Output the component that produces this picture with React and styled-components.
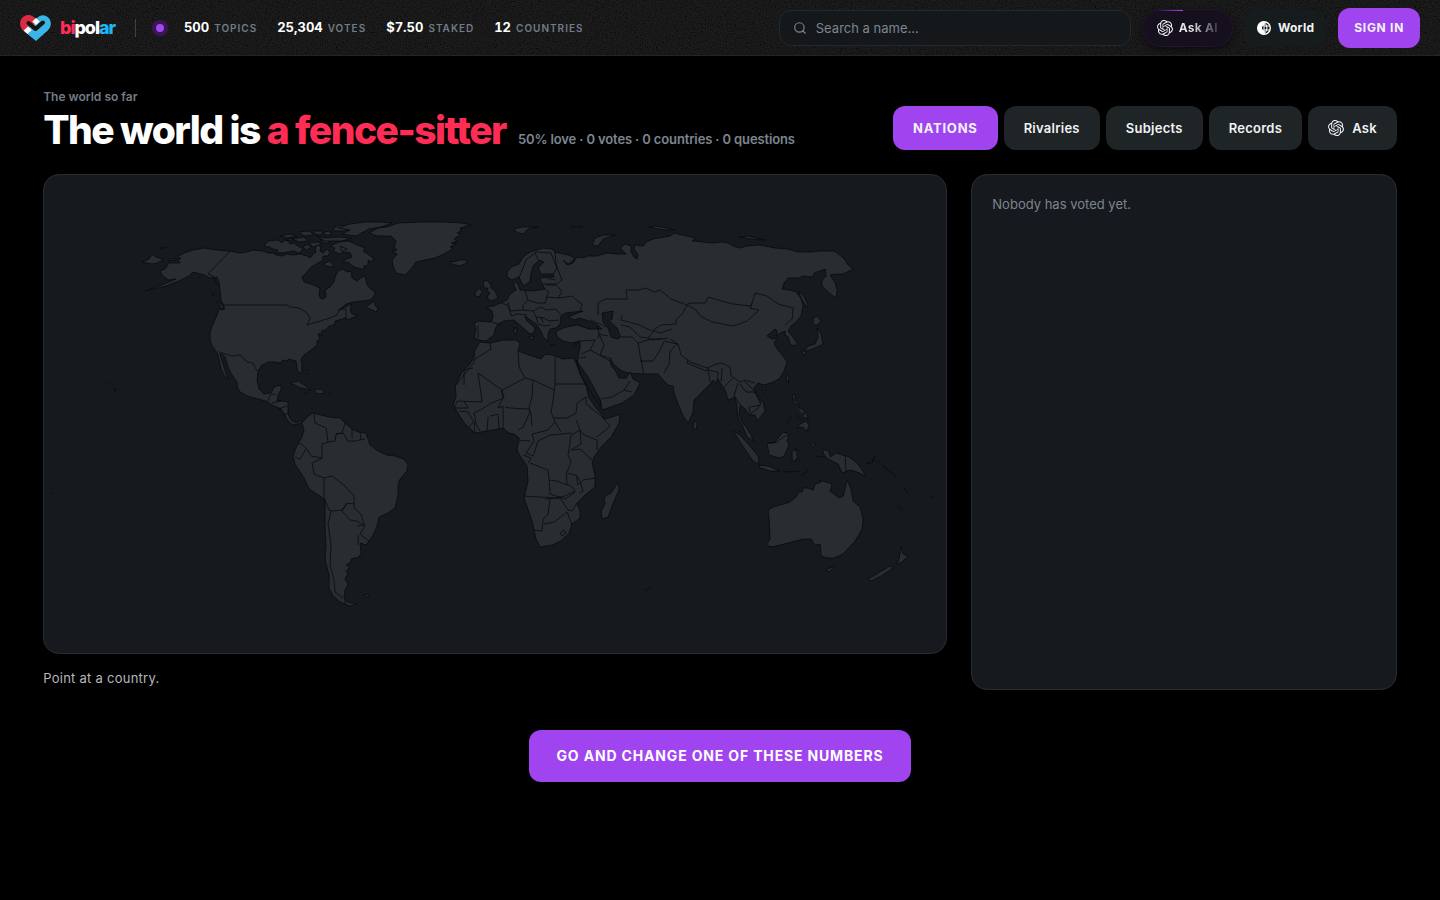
import React from 'react'
import styled, { createGlobalStyle } from 'styled-components';
import { SiOpenai } from 'react-icons/si';
import { Search } from 'lucide-react';

const GlobalStyle = createGlobalStyle`
  * {
    box-sizing: border-box;
  }
  body {
    margin: 0;
    background: #000;
    color: #fff;
    font-family: Inter, "Liberation Sans", sans-serif;
  }
  button, input {
    font-family: inherit;
  }
`;

const stats = [
  { value: '500', label: 'Topics' },
  { value: '25,304', label: 'Votes' },
  { value: '$7.50', label: 'Staked' },
  { value: '12', label: 'Countries' },
];

const tabs = ['Nations', 'Rivalries', 'Subjects', 'Records', 'Ask'];

// Land masses, north to south
const land = [
  // north america
  'M169 263L180 263 178 260 168 261 170 259 181 259 178 256 184 253 193 250 204 248 217 250 230 251 240 253 247 252 253 250 263 251 268 253 273 253 276 255 283 256 286 254 293 255 300 254 307 256 310 258 313 254 316 252 315 248 318 245 321 247 320 251 323 253 327 249 330 252 328 256 323 256 322 261 316 264 310 268 307 272 302 277 304 282 311 284 320 288 319 294 320 298 323 299 326 297 325 290 330 287 334 282 335 277 338 271 343 269 347 272 351 271 352 278 357 281 362 277 365 276 367 285 371 289 375 292 374 296 370 300 363 301 353 302 346 304 338 311 345 307 352 304 350 309 352 314 358 315 352 318 347 320 346 317 342 319 335 321 335 324 328 327 325 331 323 330 321 332 322 336 319 333 318 335 320 338 317 341 317 345 311 350 304 355 301 359 302 366 302 371 300 374 297 369 296 361 289 359 286 361 283 360 280 363 274 362 268 362 261 366 258 371 257 380 259 389 264 394 271 393 274 387 281 385 281 390 278 395 277 401 283 401 288 402 288 414 291 420 296 423 301 421 303 423 298 424 293 425 288 421 284 414 281 409 272 405 266 401 258 399 247 396 239 391 237 386 237 382 232 375 228 367 225 357 222 354 220 354 223 364 225 370 228 379 225 377 221 369 218 355 216 351 212 346 210 340 210 332 213 324 217 315 219 309 223 310 224 306 221 300 220 290 219 283 217 277 210 278 204 275 197 273 193 272 189 276 179 281 166 286 145 291 164 284 176 279 168 280 162 275 160 271 165 269Z',
  'M142 262L149 259 152 254 156 257 163 259 158 263 152 264Z',
  'M160 248L166 247 164 249Z',
  'M264 246L268 241 278 240 282 243 284 240 288 241 290 244 294 243 298 246 303 249 299 253 293 251 288 252 281 253 276 252 278 250 273 249 269 247Z',
  'M280 236L290 234 297 236 287 238Z',
  'M284 240L290 238 297 239 291 240Z',
  'M292 239L304 237 308 241 299 242Z',
  'M303 247L308 244 311 248 306 250Z',
  'M309 243L318 242 322 244 313 247Z',
  'M320 240L327 240 330 243 324 243Z',
  'M316 236L325 238 338 237 352 238 342 241 325 241Z',
  'M299 232L309 231 314 235 304 236Z',
  'M313 231L323 231 321 235 315 234Z',
  'M324 232L330 231 331 235 325 235Z',
  'M332 229L340 225 348 227 343 231 335 231Z',
  'M338 228L350 224 365 222 380 222 392 223 381 227 369 229 356 236 342 234 350 230Z',
  'M330 246L339 242 349 241 357 245 365 248 363 251 368 254 374 259 371 262 368 260 368 265 364 266 364 269 361 269 354 267 348 262 343 263 346 259 352 257 350 253 346 252 339 254 333 251 335 248Z',
  'M323 264L330 261 334 266 328 267Z',
  'M340 246L347 249 342 252Z',
  // greenland
  'M369 233L378 228 387 227 398 223 420 222 445 222 462 223 471 225 460 228 461 231 457 233 461 234 454 239 457 241 451 243 456 244 450 247 453 249 444 254 435 258 425 260 416 262 411 269 405 275 396 273 393 266 392 260 397 254 392 251 397 250 394 248 396 241 391 236 377 236Z',
  'M449 261L454 262 460 260 466 260 467 263 459 266 452 264Z',
  'M365 308L374 301 375 305 378 309 376 312 370 309Z',
  'M217 301L220 303 225 309 221 308Z',
  'M211 291L214 292 213 296Z',
  // caribbean and hawaii
  'M290 383L298 381 304 385 311 390 301 388Z',
  'M304 392L309 393 306 395Z',
  'M314 390L321 389 325 393 317 394Z',
  'M328 393L331 393 330 395Z',
  'M305 370L308 371M309 373L307 375',
  'M106 383L108 384M111 385L113 386M114 388L116 390 115 391Z',
  // south america
  'M302 423L307 417 313 413 317 414 321 415 329 417 340 418 345 423 352 429 358 432 366 433 370 445 378 451 387 455 395 456 404 459 408 465 407 471 400 479 398 485 398 495 395 508 388 513 379 517 377 526 374 533 369 541 366 545 360 543 361 553 359 557 351 559 351 562 346 565 350 567 346 571 348 573 345 579 348 584 345 590 344 597 347 602 357 604 350 606 340 602 333 596 329 588 329 575 325 560 326 546 325 529 325 500 320 496 309 489 304 478 295 464 293 456 297 445 302 437 304 430Z',
  'M363 595L369 594 368 597Z',
  // europe and asia
  'M507 272L511 267 519 264 523 257 530 252 537 250 543 248 552 249 555 252 568 255 573 257 574 260 568 264 563 260 567 265 573 263 577 257 583 258 588 256 597 256 607 253 618 254 626 254 620 248 625 244 631 246 631 252 634 257 637 259 638 255 634 249 635 245 643 246 646 242 653 239 670 236 674 233 686 236 695 238 692 241 703 242 713 243 722 242 728 243 733 246 740 248 747 246 758 245 765 246 775 248 788 249 797 252 811 252 820 251 834 251 841 256 845 260 847 264 853 269 843 274 838 274 830 275 835 283 837 290 836 298 829 293 822 286 822 280 826 276 825 269 820 271 814 273 813 277 803 276 798 278 788 278 784 283 782 289 789 290 796 292 801 299 803 305 801 316 796 322 791 326 788 331 792 336 797 343 794 346 790 344 788 337 785 335 785 331 780 333 776 336 777 331 775 329 770 333 767 336 772 339 777 338 774 343 777 349 783 356 787 362 784 371 779 379 773 382 764 385 758 383 754 388 757 395 763 402 765 411 757 421 755 415 749 415 745 409 740 405 739 414 742 422 746 427 751 435 753 441 747 437 742 425 739 420 737 413 737 407 735 397 728 400 725 390 720 383 718 379 716 383 713 380 711 383 703 391 694 400 693 412 688 423 683 416 678 404 674 393 673 386 668 385 662 379 658 374 642 374 628 373 622 371 615 366 610 359 611 365 616 372 619 378 626 378 630 372 633 379 640 383 634 395 622 403 602 410 600 400 593 388 585 376 577 366 578 357 580 347 580 341 571 343 563 341 557 337 556 331 566 327 577 325 589 329 602 329 596 324 586 320 579 318 574 320 568 317 578 313 583 311 574 312 565 313 561 316 560 324 556 328 550 329 548 334 548 341 544 338 540 330 536 324 529 319 525 316 526 320 535 328 534 333 530 334 523 328 514 320 504 321 498 324 495 329 494 335 486 341 479 340 474 338 476 329 474 323 479 321 491 322 493 317 492 311 486 307 494 306 500 303 507 300 510 294 516 290 513 284 517 282 520 290 532 291 545 289 541 282 540 278 547 277 554 277 553 274 541 274 538 268 544 262 539 260 533 266 531 273 530 281 524 286 521 282 519 277 512 280 507 277Z',
  'M489 300L487 297 490 293 487 291 488 288 484 288 483 282 487 280 491 285 491 288 495 291 498 298 491 301Z',
  'M475 292L480 288 482 292 479 297 475 296Z',
  'M513 229L522 227 538 227 528 229 523 234 518 233Z',
  'M570 227L581 226M583 227L579 228',
  'M592 245L595 238 604 235 615 235 603 239 598 246Z',
  'M649 227L655 226 666 228 675 230 664 230Z',
  'M739 237L748 236 765 240 751 239Z',
  'M798 291L803 295 808 305 807 307 802 300Z',
  'M813 318L817 316 821 321 816 326 813 323Z',
  'M817 328L821 334 823 344 819 346 810 350 803 352 808 346 815 344 818 337Z',
  'M801 351L806 351 804 356Z',
  'M787 374L789 377 788 383 786 379Z',
  'M762 391L766 390 764 394Z',
  'M694 420L697 424 696 430 693 428Z',
  'M528 337L534 336 533 340Z',
  'M513 324L516 323 516 327 514 327ZM514 328L517 329 516 334 514 333Z',
  'M550 345L556 345M573 345L578 343 575 346Z',
  // africa
  'M480 342L490 343 503 340 516 340 520 343 518 351 529 355 541 359 545 354 552 355 563 359 573 358 576 363 580 374 586 386 589 398 596 408 602 415 604 419 612 417 620 414 619 423 611 437 601 447 594 457 592 463 595 475 595 487 586 494 577 503 580 511 580 518 572 524 569 533 561 541 552 545 540 547 536 539 532 521 524 498 528 481 527 466 520 456 517 450 519 438 514 434 509 433 503 428 492 430 481 432 475 433 465 424 459 415 453 405 456 396 455 386 462 372 469 365 474 358 475 350Z',
  'M618 482L619 490 614 501 608 517 602 519 601 511 605 504 604 497 611 493Z',
  // islands of the south east
  'M792 395L795 394 795 400 800 406 794 403Z',
  'M798 407L805 411 802 414M806 412L808 419 803 417M797 415L802 420',
  'M800 424L806 421 809 425 807 431 802 427 797 428Z',
  'M787 423L791 417M738 431L741 432',
  'M733 431L740 435 749 445 758 456 759 464 753 461 744 448Z',
  'M759 465L768 466 780 471 770 471 760 468Z',
  'M783 472L800 471M801 475L808 471',
  'M767 443L774 443 783 432 789 434 787 441 789 445 784 456 779 458 769 455Z',
  'M792 450L796 448 794 451 799 451 796 454 800 461 796 458 795 462 792 459Z',
  'M813 442L815 445 813 448M816 456L825 457',
  'M822 449L829 451 830 457 836 453 849 457 857 463 862 470 866 476 857 472 850 470 842 473 838 464 828 459 824 455Z',
  'M866 464L873 461 875 456 872 463ZM877 460L880 463M882 465L896 477M904 488L908 494M898 506L902 510 900 511ZM930 498L937 495',
  'M51 493L53 493M645 590L650 587 649 590Z',
  // australia and new zealand
  'M768 510L773 507 790 502 797 496 798 492 802 492 803 488 808 488 813 490 815 484 821 482 819 480 826 482 832 484 830 491 839 498 843 496 847 480 851 489 853 501 860 507 863 519 862 529 855 541 843 554 834 558 827 558 821 556 820 544 815 545 811 539 803 539 788 543 780 545 772 547 766 545 770 539 769 520Z',
  'M826 569L833 567 830 572 826 570Z',
  'M901 547L903 554 908 556 902 562 897 564 899 558Z',
  'M868 579L878 573 890 566 893 568 881 576 871 581Z',
];

// Inland waters
const water = [
  'M602 313L613 311 612 319 609 321 617 328 620 336 618 339 611 337 608 328 603 322Z',
  'M576 360L588 377 601 402 600 406 592 394 582 377Z',
];

const borders = [
  // americas
  'M230 251L208 274 213 276 216 282 220 287',
  'M224 305L287 305 290 307 299 308 306 312 310 318 307 325 313 323 320 321 330 318 337 315 340 309 346 309 346 316',
  'M219 352L232 356 240 355 247 362 253 363 257 371',
  'M268 401L270 395 276 394M272 403L281 401M278 409L287 406M283 414L288 414',
  'M314 414L315 423 326 428 328 442 335 441 336 434 342 433 345 423M336 434L343 433 348 441 354 441 365 439M352 429L352 438M360 431L361 440M328 442L322 444 322 458 311 456 307 449 300 443 298 444',
  'M295 457L300 459 306 449M322 458L312 463 314 474 324 478 324 498 329 510 331 511 342 510 347 503 354 504 354 496 345 486 332 476 324 478',
  'M347 503L342 511 350 520 357 521 365 526 360 534 369 541M357 526L364 525 361 514 354 508 354 504M331 511L328 524 331 545 330 565 334 580 335 592 343 598M345 599L345 605M358 535L358 545',
  // europe
  'M519 278L522 270 526 260 536 252 551 253 554 261 557 268 553 274M538 260L535 253',
  'M555 252L556 265 562 280 556 284 542 284M547 278L556 280M545 289L549 292 546 297 559 298 572 296 577 301 582 304 580 311',
  'M525 291L528 300 523 305 523 310 510 311 508 302M528 300L537 303 545 303 547 297M523 310L533 311 541 307 546 310 556 309 561 315M533 311L536 317 544 318 549 321 559 320M510 311L511 316 517 314 527 315M536 317L538 324 544 326 550 325M541 317L543 323M501 303L507 305 510 311M492 322L500 325M478 325L478 338',
  'M546 285L556 285 562 291 558 298M590 320L600 324 606 327M597 325L599 334 598 338M599 334L608 336',
  // middle east and central asia
  'M598 315L598 303 605 299 627 299 626 290 639 290 646 288 654 292 660 290 671 299 687 305 682 314 676 320 676 324 661 325 652 331 639 325 629 322 621 320 622 315',
  'M621 325L630 327 640 337 648 338 654 331 660 333 672 329M648 338L652 340 668 338',
  'M599 334L604 345 600 355 612 359M580 341L595 340 590 350 581 354M590 350L610 361M580 358L586 357M619 337L632 337 638 343 651 339 662 339M638 343L640 355 643 370 643 374M640 361L653 361 660 350 664 341 677 344 670 351 669 364 664 373M601 399L612 397 624 390 632 392M624 390L630 381',
  'M687 304L691 303 705 303 708 297 725 302 733 304 751 306 755 293 767 296 778 304 793 308 792 319 785 325',
  'M687 305L696 310 700 316 712 322 733 326 747 321 759 310 750 308 752 303',
  'M670 339L678 344 681 355 690 362 707 368 716 364 722 363 730 367 731 376 740 382 745 380 755 383M688 359L687 363 706 371 708 368M708 369L710 382M708 370L718 372 717 380M722 368L721 382M733 378L724 387M738 383L734 395 740 405M740 384L746 392 755 392 760 403M744 381L752 388 761 402 758 408 750 414M749 407L761 405M749 407L750 414',
  // africa
  'M490 343L491 349 475 359 474 362 456 385M473 368L464 370 464 385M478 373L502 390 525 378 519 367 518 351M478 373L482 402 457 401 455 407M502 390L504 398 491 403 482 409M525 378L533 380 554 390M555 357L555 384 586 384M555 384L553 400 551 412 555 422 548 430 532 434M533 380L532 396 529 408 531 414 532 426',
  'M505 407L510 408 528 409 530 412 523 427 518 430M498 408L503 406 503 428M490 416L498 414 499 429M488 417L487 431M482 409L474 413 476 424 480 431M459 411L468 412 473 421M455 408L468 408 464 401M469 427L474 421 475 433M501 390L503 397 498 408',
  'M532 434L534 441 526 453 533 456 538 441 550 435 562 434 571 433M518 440L530 441M523 455L531 458 528 463M530 463L548 470 549 480 557 481 567 485M555 422L561 432M554 418L567 418 576 413 577 403 586 397 586 404 601 416M576 420L580 430 571 435 568 455 571 462 567 472M580 430L584 435 597 440 597 450M571 450L580 449 592 460M580 430L581 444 571 450M601 416L610 426 597 437',
  'M524 496L555 498 565 496 575 491 572 487 567 484 566 473 576 475 578 485 583 480 595 478M549 480L550 494 565 499 575 492M550 498L548 514 543 519 542 531 533 530M545 499L560 498 568 510 572 511 577 503M544 524L554 522 567 512 572 525M576 475L580 481 583 491 579 493',
  'M560 533L564 530 566 533 562 536Z',
  // islands
  'M845 456L846 472M768 443L777 442 783 437 788 435',
];

function WorldMap() {
  return (
    <MapSvg viewBox='44 175 902 478' role='img' aria-label='World map'>
      <g fill='#2a2d30' stroke='#090b0e' strokeWidth='0.8' strokeLinejoin='round'>
        {land.map((d) => <path key={d} d={d} />)}
      </g>
      <g fill='#16191d' stroke='#090b0e' strokeWidth='0.8'>
        {water.map((d) => <path key={d} d={d} />)}
      </g>
      <g fill='none' stroke='#090b0e' strokeWidth='0.8' strokeLinejoin='round'>
        {borders.map((d) => <path key={d} d={d} />)}
      </g>
    </MapSvg>
  )
}

function HeartLogo() {
  return (
    <svg width='32' height='28' viewBox='1 0 30 28' preserveAspectRatio='none' aria-hidden='true'>
      <path d='M16 27L27 16.500C35 8 25 -3.500 17.500 3.500L8.500 12.500 3.500 16Z' fill='#3ab5e6' />
      <path d='M4.500 17C-4 9 5 -4 14 3L18 6.500 13 11.500 9 13Z' fill='#dc2b40' />
      <path d='M4.500 16.500L8.500 12.500 12 16 8 20Z' fill='#fff' />
      <path d='M9 9L15.500 15 22.500 8.500' fill='none' stroke='#141414' strokeWidth='4' strokeLinecap='round' strokeLinejoin='round' />
      <path d='M12.500 7.500L16 4 19.500 7.500 16 11Z' fill='#fff' />
    </svg>
  )
}

function GlobeIcon() {
  return (
    <svg width='14' height='14' viewBox='0 0 14 14' fill='none' stroke='#fff' aria-hidden='true'>
      <circle cx='7' cy='7' r='6.300' strokeWidth='1.400' />
      <path d='M7 1A6 6 0 0 0 7 13V10L4.500 8V5.500L7 4Z' fill='#fff' />
      <path d='M7 1V13M7 1Q13 7 7 13M7 5H12.500M7 9H12.500' />
    </svg>
  )
}

function App() {
  return (
    <>
      <GlobalStyle />
      <Header>
        <Noise aria-hidden='true'>
          <filter id='grain'>
            <feTurbulence type='fractalNoise' baseFrequency='0.8' numOctaves='3' stitchTiles='stitch' />
            <feColorMatrix values='2 0 0 0 -0.5  2 0 0 0 -0.5  2 0 0 0 -0.5  0 0 0 0 1' />
          </filter>
          <rect width='100%' height='100%' filter='url(#grain)' />
        </Noise>
        <Brand href='#'>
          <HeartLogo />
          <BrandName><Love>bi</Love>pol<Hate>ar</Hate></BrandName>
        </Brand>
        <Divider />
        <LiveDot />
        <Stats>
          {stats.map((stat) => (
            <Stat key={stat.label}>
              <strong>{stat.value}</strong>
              <span>{stat.label}</span>
            </Stat>
          ))}
        </Stats>
        <Actions>
          <SearchBox>
            <Search size={14} aria-hidden='true' />
            <input type='search' placeholder='Search a name…' aria-label='Search a name' />
          </SearchBox>
          <AskButton>
            <SiOpenai size={16} />
            <span>Ask AI</span>
          </AskButton>
          <WorldButton>
            <GlobeIcon />
            World
          </WorldButton>
          <SignInButton>Sign in</SignInButton>
        </Actions>
      </Header>
      <Main>
        <Eyebrow>The world so far</Eyebrow>
        <TitleRow>
          <Heading>
            <Title>The world is <Love>a fence-sitter</Love></Title>
            <Summary>50% love · 0 votes · 0 countries · 0 questions</Summary>
          </Heading>
          <Tabs>
            {tabs.map((tab, i) => (
              <Tab key={tab} $active={i === 0}>
                {tab === 'Ask' && <SiOpenai size={16} />}
                {tab}
              </Tab>
            ))}
          </Tabs>
        </TitleRow>
        <Columns>
          <div>
            <MapCard>
              <WorldMap />
            </MapCard>
            <Caption>Point at a country.</Caption>
          </div>
          <Ranking>Nobody has voted yet.</Ranking>
        </Columns>
        <CtaRow>
          <Cta href='#'>Go and change one of these numbers</Cta>
        </CtaRow>
      </Main>
    </>
  )
}

const Header = styled.header`
  position: relative;
  display: flex;
  align-items: center;
  height: 56px;
  padding: 0 20px;
  background: #0b0b0b;
  border-bottom: 1px solid #222426;
  > * {
    flex-shrink: 0;
  }
`;

const Noise = styled.svg`
  position: absolute;
  inset: 0;
  width: 100%;
  height: 100%;
  opacity: 0.08;
  pointer-events: none;
`;

const Brand = styled.a`
  position: relative;
  display: flex;
  align-items: center;
  gap: 8px;
  color: #fff;
  text-decoration: none;
`;

const BrandName = styled.span`
  font-size: 18px;
  font-weight: 800;
  line-height: 24px;
  letter-spacing: -0.06em;
`;

const Love = styled.span`
  color: #ff2d55;
`;

const Hate = styled.span`
  color: #1fb6f5;
`;

const Divider = styled.span`
  width: 1px;
  height: 18px;
  margin: 0 16px 0 20px;
  background: #33363a;
`;

const LiveDot = styled.span`
  position: relative;
  width: 16px;
  height: 16px;
  border: 4px solid #37184f;
  border-radius: 50%;
  background: #a349f0;
  box-shadow: 0 0 0 1px #25152f;
`;

const Stats = styled.div`
  position: relative;
  display: flex;
  gap: 20px;
  margin-left: 16px;
`;

const Stat = styled.div`
  display: flex;
  align-items: baseline;
  gap: 5px;
  line-height: 20px;
  strong {
    font-size: 13px;
    font-weight: 700;
    font-variant-numeric: tabular-nums;
  }
  span {
    color: #737b86;
    font-size: 10px;
    font-weight: 600;
    letter-spacing: 0.1em;
    text-transform: uppercase;
  }
`;

const Actions = styled.div`
  position: relative;
  display: flex;
  align-items: center;
  gap: 12px;
  margin-left: auto;
`;

const SearchBox = styled.label`
  display: flex;
  align-items: center;
  gap: 9px;
  width: 352px;
  height: 36px;
  padding: 0 13px;
  border: 1px solid #23282c;
  border-radius: 12px;
  background: #14181b;
  color: #7d8590;
  input {
    flex: 1;
    min-width: 0;
    padding: 0;
    border: 0;
    outline: 0;
    background: none;
    color: #fff;
    font-size: 13px;
  }
  input::placeholder {
    color: #7d8590;
  }
`;

const HeaderButton = styled.button`
  display: flex;
  align-items: center;
  height: 36px;
  border: 0;
  color: #f1f3f4;
  font-size: 12px;
  font-weight: 700;
  letter-spacing: 0.02em;
  cursor: pointer;
`;

const AskButton = styled(HeaderButton)`
  gap: 6px;
  padding: 0 14px;
  border-radius: 18px;
  background: linear-gradient(90deg, transparent, #a349f0) 12px 0 / 28px 1px no-repeat, #160f1e;
  box-shadow: 0 0 0 1px #23152e, 0 3px 6px #0a0a0a;
  span {
    background: linear-gradient(90deg, #e8e8ea 30%, #3a3541);
    background-clip: text;
    color: transparent;
  }
`;

const WorldButton = styled(HeaderButton)`
  gap: 7px;
  padding: 0 12px 0 13px;
  border-radius: 12px;
  background: #161b1d;
`;

const SignInButton = styled(HeaderButton)`
  height: 40px;
  padding: 0 16px;
  border-radius: 12px;
  background: #a044f0;
  letter-spacing: 0.06em;
  text-transform: uppercase;
`;

const Main = styled.main`
  padding: 32px 3vw 48px;
`;

const Eyebrow = styled.p`
  margin: 0;
  color: #737b86;
  font-size: 12px;
  font-weight: 600;
  line-height: 18px;
`;

const TitleRow = styled.div`
  display: flex;
  align-items: flex-end;
  justify-content: space-between;
  gap: 24px;
`;

const Heading = styled.div`
  display: flex;
  align-items: baseline;
  gap: 12px;
`;

const Title = styled.h1`
  margin: 0;
  font-size: 39px;
  font-weight: 800;
  line-height: 40px;
  letter-spacing: -0.04em;
`;

const Summary = styled.p`
  margin: 0;
  color: #7d8590;
  font-size: 13px;
  font-weight: 600;
  letter-spacing: -0.01em;
`;

const Tabs = styled.nav`
  display: flex;
  gap: 6px;
`;

const Tab = styled.button`
  display: flex;
  align-items: center;
  gap: 8px;
  height: 44px;
  padding: 0 20px;
  border: 0;
  border-radius: 12px;
  background: ${(p) => (p.$active ? '#a044f0' : '#1f2427')};
  color: #f1f3f4;
  font-size: 13px;
  font-weight: ${(p) => (p.$active ? 700 : 600)};
  letter-spacing: ${(p) => (p.$active ? '0.06em' : '0.02em')};
  text-transform: ${(p) => (p.$active ? 'uppercase' : 'none')};
  cursor: pointer;
`;

const Columns = styled.div`
  display: grid;
  grid-template-columns: 17fr 8fr;
  gap: 24px;
  margin-top: 24px;
`;

const Card = styled.section`
  border: 1px solid #282c30;
  border-radius: 16px;
  background: #16191d;
`;

const MapCard = styled(Card)`
  overflow: hidden;
`;

const MapSvg = styled.svg`
  display: block;
  width: 100%;
`;

const Caption = styled.p`
  margin: 14px 0 0;
  padding-bottom: 2px;
  color: #b4b8bd;
  font-size: 13px;
  line-height: 20px;
  letter-spacing: 0.02em;
`;

const Ranking = styled(Card)`
  padding: 18px 20px;
  color: #7d8590;
  font-size: 13px;
  line-height: 22px;
`;

const CtaRow = styled.div`
  display: flex;
  justify-content: center;
  margin-top: 40px;
`;

const Cta = styled.a`
  padding: 0 28px;
  border-radius: 12px;
  background: #a044f0;
  color: #fff;
  font-size: 14px;
  font-weight: 700;
  line-height: 52px;
  letter-spacing: 0.06em;
  text-decoration: none;
  text-transform: uppercase;
`;

export default App;
